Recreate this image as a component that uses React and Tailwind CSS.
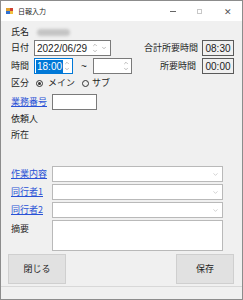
import { ChevronDown, ChevronUp } from "lucide-react";

const font = "font-['Segoe_UI','Noto_Sans_CJK_JP',sans-serif]";
const num = "font-['Liberation_Sans',sans-serif] text-[10px]";

const Spin = () => (
  <div className="flex flex-col items-center justify-center text-[#7a7a7a] leading-none">
    <ChevronUp size={6} strokeWidth={2} />
    <ChevronDown size={6} strokeWidth={2} />
  </div>
);

const Combo = () => (
  <div className="w-[171px] h-[16px] bg-white border border-[#b9b9b9] flex items-center justify-end pr-[3px] text-[#9a9a9a]">
    <ChevronDown size={7} strokeWidth={1.5} />
  </div>
);

const LinkLabel = ({ children }) => (
  <span className="text-[#2a52d6] w-[41px] shrink-0">
    <span className="underline underline-offset-1">{children}</span>
  </span>
);

const TimeBox = ({ value }) => (
  <div className={`w-[32px] h-[16px] border border-[#5a5a5a] bg-[#f0f0f0] flex items-center justify-center text-[#222] ${num}`}>
    {value}
  </div>
);

const App = () => {
  return (
    <div className={`w-[243px] h-[300px] bg-[#f0f0f0] border border-[#8c8c8c] flex flex-col text-[9px] text-[#1e1e1e] ${font}`}>
      {/* title bar */}
      <div className="h-[20px] bg-white flex items-center shrink-0">
        <div className="ml-[5px] w-[7px] h-[6px] grid grid-cols-2">
          <div className="bg-[#e0a030]" />
          <div className="bg-[#d04030]" />
          <div className="bg-[#3070d0]" />
          <div className="bg-[#f0c040]" />
        </div>
        <span className="ml-[5px] text-[7px] text-[#222]">日報入力</span>
        <div className="ml-auto flex items-center text-[#555]">
          <div className="w-[6px] h-px bg-[#666] mr-[21px]" />
          <div className="w-[5px] h-[5px] border border-[#c8c8c8] mr-[22px]" />
          <span className="text-[9px] leading-none mr-[10px]">✕</span>
        </div>
      </div>

      <div className="flex flex-col pl-[10px] pr-[8px]">
        {/* 氏名 */}
        <div className="mt-[4px] h-[14px] flex items-center">
          <span className="w-[26px] shrink-0">氏名</span>
          <div className="w-[33px] h-[7px] bg-[#c4c4c4] rounded-sm blur-[1.5px]" />
        </div>

        {/* 日付 */}
        <div className="mt-px h-[16px] flex items-center">
          <span className="w-[23px] shrink-0">日付</span>
          <div className="w-[77px] h-[16px] bg-white border border-[#7a7a7a] flex items-center pl-[2px] pr-[3px]">
            <span className={num}>2022/06/29</span>
            <div className="ml-auto flex items-center gap-[3px]">
              <Spin />
              <ChevronDown size={6} strokeWidth={2} className="text-[#7a7a7a]" />
            </div>
          </div>
          <span className="ml-auto mr-[4px]">合計所要時間</span>
          <TimeBox value="08:30" />
        </div>

        {/* 時間 */}
        <div className="mt-[2px] h-[16px] flex items-center">
          <span className="w-[23px] shrink-0">時間</span>
          <div className="w-[39px] h-[16px] bg-white border border-[#0078d7] flex items-center pl-px pr-[2px]">
            <span className={`bg-[#0078d7] text-white px-px leading-[13px] ${num}`}>18:00</span>
            <div className="ml-auto">
              <Spin />
            </div>
          </div>
          <span className={`ml-[8px] w-[12px] ${num}`}>~</span>
          <div className="w-[39px] h-[16px] bg-white border border-[#7a7a7a] flex items-center justify-end pr-[2px]">
            <Spin />
          </div>
          <span className="ml-auto mr-[6px]">所要時間</span>
          <TimeBox value="00:00" />
        </div>

        {/* 区分 */}
        <div className="mt-[2px] h-[14px] flex items-center">
          <span className="w-[25px] shrink-0">区分</span>
          <div className="w-[7px] h-[7px] rounded-full border border-[#333] flex items-center justify-center">
            <div className="w-[3px] h-[3px] rounded-full bg-[#333]" />
          </div>
          <span className="ml-[5px] w-[34px]">メイン</span>
          <div className="w-[7px] h-[7px] rounded-full border border-[#333]" />
          <span className="ml-[3px]">サブ</span>
        </div>

        {/* 業務番号 */}
        <div className="mt-[4px] h-[16px] flex items-center">
          <LinkLabel>業務番号</LinkLabel>
          <div className="w-[45px] h-[16px] bg-white border border-[#7a7a7a]" />
        </div>

        <div className="mt-[2px] h-[14px] flex items-center">依頼人</div>
        <div className="mt-[2px] h-[14px] flex items-center">所在</div>

        <div className="mt-[24px] h-[16px] flex items-center">
          <LinkLabel>作業内容</LinkLabel>
          <Combo />
        </div>
        <div className="mt-[2px] h-[16px] flex items-center">
          <LinkLabel>同行者1</LinkLabel>
          <Combo />
        </div>
        <div className="mt-[2px] h-[16px] flex items-center">
          <LinkLabel>同行者2</LinkLabel>
          <Combo />
        </div>
        <div className="mt-[2px] h-[31px] flex items-start">
          <span className="w-[41px] shrink-0 mt-[2px]">摘要</span>
          <div className="w-[171px] h-[31px] bg-white border border-[#b9b9b9]" />
        </div>

        <div className="mt-[3px] h-[30px] flex items-stretch -ml-[3px]">
          <button className="w-[58px] bg-[#e1e1e1] border border-[#cfcfcf] text-[9px]">閉じる</button>
          <button className="ml-auto w-[58px] bg-[#e1e1e1] border border-[#cfcfcf] text-[9px]">保存</button>
        </div>
      </div>

      <div className="mt-auto h-[13px] border-t border-[#d8d8d8] bg-[#f0f0f0]" />
    </div>
  );
};

export default App;
